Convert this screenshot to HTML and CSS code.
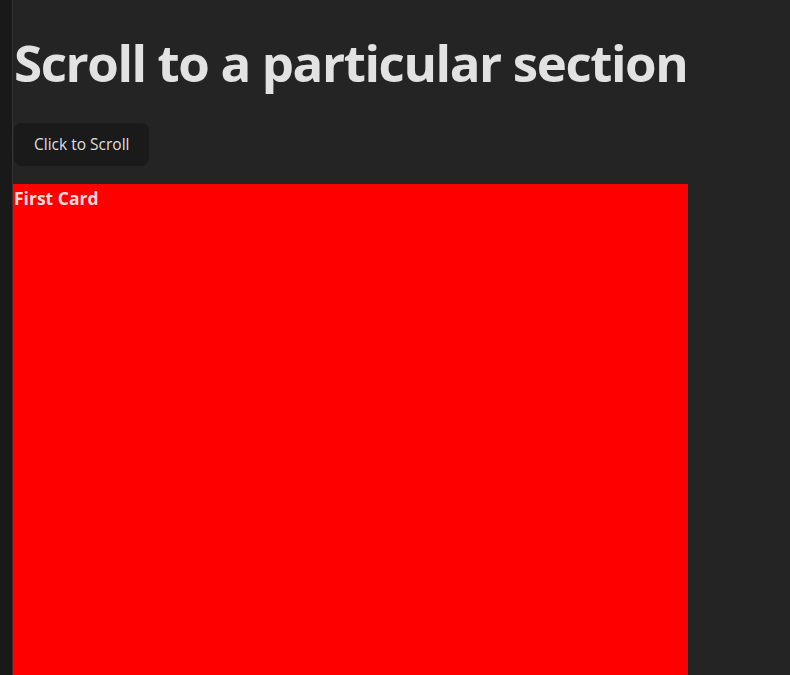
FILE: index.html
```html
<!DOCTYPE html>
<html lang="en">
<head>
<meta charset="utf-8">
<title>Scroll</title>
<link rel="stylesheet" href="styles.css">
</head>
<body>
<div class="layout">
  <aside class="rail"></aside>
  <main class="main">
    <h1 class="title">Scroll to a particular section</h1>
    <button class="btn">Click to Scroll</button>
    <section class="card">
      <h3 class="card-title">First Card</h3>
    </section>
  </main>
</div>
</body>
</html>
```

FILE: styles.css
```css
html, body {
  margin: 0;
  padding: 0;
  height: 100%;
  overflow: hidden;
}
body {
  background: #242424;
  color: rgba(255, 255, 255, 0.87);
  font-family: "Open Sans", "Noto Sans", sans-serif;
  line-height: 1.5;
  font-size: 16px;
}
.layout {
  display: flex;
  min-height: 100%;
}
.rail {
  width: 12px;
  flex: none;
  background: #19191a;
  border-right: 1px solid #333333;
}
.main {
  flex: 1;
}
.title {
  font-size: 51px;
  line-height: 1.1;
  font-weight: 700;
  margin: 34px 0 33px 1px;
  letter-spacing: -1.4px;
}
.btn {
  display: block;
  margin-left: 1px;
  border: 1px solid transparent;
  border-radius: 8px;
  padding: 8px 19px;
  font-family: inherit;
  font-size: 15.5px;
  font-weight: 500;
  line-height: 25px;
  background: #1a1a1a;
  color: rgba(255, 255, 255, 0.87);
  cursor: pointer;
}
.card {
  margin-top: 18px;
  width: 675px;
  height: 600px;
  background: #ff0000;
}
.card-title {
  margin: 0;
  padding-left: 1px;
  font-size: 17.5px;
  line-height: 28px;
  font-weight: 700;
}
```
